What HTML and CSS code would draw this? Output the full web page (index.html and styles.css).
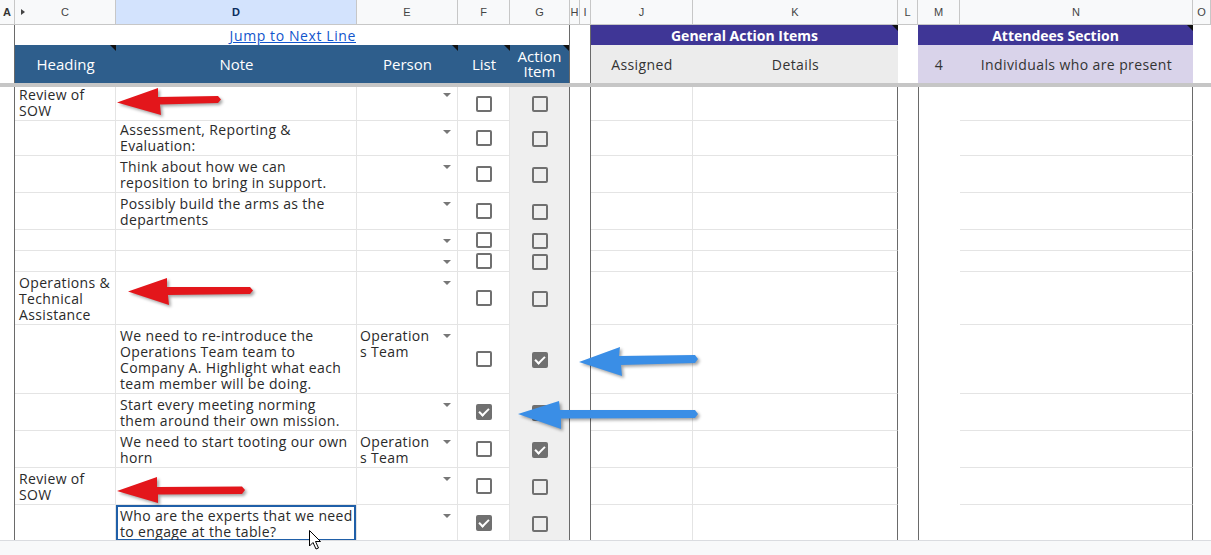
FILE: index.html
```html
<!DOCTYPE html>
<html lang="en">
<head>
    <meta charset="UTF-8">
    <title>Meeting Notes</title>
    <link rel="stylesheet" href="styles.css">
</head>
<body>
    <div class="sheet">
        <!-- column letters -->
        <div class="row colheads">
            <div class="corner">A</div>
            <div class="hidden-b">C</div>
            <div class="active">D</div>
            <div>E</div>
            <div>F</div>
            <div>G</div>
            <div>H</div>
            <div>I</div>
            <div>J</div>
            <div>K</div>
            <div>L</div>
            <div>M</div>
            <div>N</div>
            <div>O</div>
        </div>

        <!-- section bands -->
        <div class="row jump">
            <div class="gutter"></div>
            <div class="link-cell"><a href="#" class="jump-link">Jump to Next Line</a></div>
            <div></div>
            <div></div>
            <div class="split"></div>
            <div></div>
            <div class="split"></div>
            <div class="band marked">General Action Items</div>
            <div></div>
            <div class="band marked">Attendees Section</div>
            <div></div>
        </div>

        <!-- column titles -->
        <div class="row titles">
            <div class="gutter"></div>
            <div class="title marked">Heading</div>
            <div class="title">Note</div>
            <div class="title marked">Person</div>
            <div class="title marked">List</div>
            <div class="title marked split wrap">Action
Item</div>
            <div></div>
            <div class="split"></div>
            <div class="sub">Assigned</div>
            <div class="sub">Details</div>
            <div></div>
            <div class="sub lav">4</div>
            <div class="sub lav">Individuals who are present</div>
            <div></div>
        </div>

        <div class="freeze"></div>

        <div class="pane" id="pane"></div>

        <div class="hscroll"></div>

        <!-- annotation arrows + mouse pointer -->
        <svg class="overlay" width="1211" height="555" viewBox="0 0 1211 555">
            <g class="arrow red">
                <polygon points="117,102.5 158,88 158,97 218,96 221,99.5 218,103 160,104.5 161,115"/>
                <polygon points="128,291.5 167,278 167,287 250,287 253,290.5 250,294 168,295 169,305"/>
                <polygon points="117,491 157,477 157,487 242,486.5 245,490 242,494 158,494.5 158,503"/>
            </g>
            <g class="arrow blue">
                <polygon points="579,362 620,347 619,356 695,355 698,359 695,363 621,365 622,376"/>
                <polygon points="518,414 559,401 560,410 695,410 698,414 695,418 561,418.5 561,429"/>
            </g>
            <path class="pointer" d="M309.5 530.5 L309.5 546 L313 542.5 L316 549 L318.5 548 L315.5 541.5 L320.5 541.5 Z"/>
        </svg>
    </div>

    <script>
        // first row is scrolled a little under the frozen rows
        let rows = [
            { h: 34, heading: "Review of\nSOW", pad: "flush" },
            { h: 35, note: "Assessment, Reporting &\nEvaluation:", pad: "tight" },
            { h: 37, note: "Think about how we can\nreposition to bring in support." },
            { h: 37, note: "Possibly build the arms as the\ndepartments" },
            { h: 21 },
            { h: 21 },
            { h: 53, heading: "Operations &\nTechnical\nAssistance" },
            { h: 69, note: "We need to re-introduce the\nOperations Team team to\nCompany A.  Highlight what each\nteam member will be doing.", person: "Operation\ns Team", action: true },
            { h: 37, note: "Start every meeting norming\nthem around their own mission.", list: true, action: true },
            { h: 37, note: "We need to start tooting our own\nhorn", person: "Operation\ns Team", action: true },
            { h: 37, heading: "Review of\nSOW" },
            { h: 37, note: "Who are the experts that we need\nto engage at the table?", list: true, selected: true }
        ];

        function box(checked) {
            return `<span class="box${checked ? " on" : ""}"></span>`;
        }

        let html = "";
        rows.forEach(function (r) {
            html += `<div class="row line ${r.pad || ""}" style="height:${r.h}px">`;
            html += `<div class="gutter"></div>`;
            html += `<div class="cell">${r.heading || ""}</div>`;
            html += `<div class="cell${r.selected ? " selected" : ""}">${r.note || ""}</div>`;
            html += `<div class="cell person"><span>${r.person || ""}</span><i class="drop"></i></div>`;
            html += `<div class="cell tick">${box(r.list)}</div>`;
            html += `<div class="tick action split">${box(r.action)}</div>`;
            html += `<div></div><div class="split"></div>`;
            html += `<div class="cell"></div><div class="cell end"></div>`;
            html += `<div></div><div class="edge"></div>`;
            html += `<div class="cell end"></div><div></div>`;
            html += `</div>`;
        });
        document.getElementById('pane').innerHTML = html;
    </script>
</body>
</html>
```

FILE: styles.css
```css
* {
    box-sizing: border-box;
}
body {
    margin: 0;
    font-family: "Open Sans", sans-serif;
    font-size: 14px;
    color: #2a2a2a;
    background: #fff;
}
.sheet {
    position: relative;
    width: 1211px;
    height: 555px;
    overflow: hidden;
}
.row {
    display: grid;
    grid-template-columns: 15px 101px 241px 101px 52px 60px 10px 11px 102px 205px 20px 42px 233px 18px;
}

/* column letters */
.colheads {
    height: 25px;
    background: #f8f9fa;
    font-family: "Liberation Sans", Arial, sans-serif;
    font-size: 11px;
    color: #444;
}
.colheads div {
    display: flex;
    align-items: center;
    justify-content: center;
    border-right: 1px solid #c7c7c7;
    border-bottom: 1px solid #c7c7c7;
}
.colheads .corner {
    font-weight: bold;
    color: #333;
    justify-content: flex-start;
    padding-left: 3px;
}
.colheads .active {
    background: #d3e3fd;
    font-weight: bold;
    color: #0b2d5e;
}
.hidden-b {
    position: relative;
}
.hidden-b::before {
    content: "";
    position: absolute;
    left: 6px;
    top: 9px;
    border-left: 4px solid #444;
    border-top: 3px solid transparent;
    border-bottom: 3px solid transparent;
}

.gutter {
    border-right: 1px solid #6a6a6a;
}
.split {
    border-right: 1px solid #6a6a6a;
}

/* band row */
.jump {
    height: 20px;
}
.link-cell {
    grid-column: span 2;
    display: flex;
    align-items: center;
    justify-content: flex-end;
    padding-right: 1px;
}
.jump-link {
    color: #1155cc;
    font-size: 14px;
    letter-spacing: 0.6px;
}
.band {
    grid-column: span 2;
    background: #3f3696;
    color: #fff;
    font-weight: bold;
    display: flex;
    align-items: center;
    justify-content: center;
}
.marked {
    position: relative;
}
.marked::after {
    content: "";
    position: absolute;
    top: 0;
    right: 0;
    border-top: 6px solid #111;
    border-left: 6px solid transparent;
}

/* title row */
.titles {
    height: 38px;
}
.title {
    background: #2e5e8c;
    color: #fff;
    font-size: 15px;
    line-height: 16px;
    display: flex;
    align-items: center;
    justify-content: center;
    text-align: center;
}
.title.wrap {
    white-space: pre-line;
    line-height: 15px;
}
.sub {
    background: #ececec;
    color: #333;
    letter-spacing: 0.4px;
    display: flex;
    align-items: center;
    justify-content: center;
}
.sub.lav {
    background: #d9d3ea;
}

.freeze {
    height: 4px;
    background: #c6c6c6;
}

/* body rows run on under the scrollbar strip */
.cell {
    border-right: 1px solid #e4e4e4;
    border-bottom: 1px solid #e4e4e4;
    padding: 3px 3px 0 4px;
    line-height: 16px;
    letter-spacing: 0.35px;
    white-space: pre-line;
}
.flush .cell {
    padding-top: 0;
}
.tight .cell {
    padding-top: 1px;
}
.cell.end {
    border-right-color: #6a6a6a;
}
.edge {
    border-left: 1px solid #6a6a6a;
}
.person {
    display: flex;
    justify-content: space-between;
    align-items: flex-start;
    padding-left: 3px;
    padding-right: 6px;
}
.drop {
    margin-top: 6px;
    border-left: 4px solid transparent;
    border-right: 4px solid transparent;
    border-top: 4px solid #777;
}
.tight .drop {
    margin-top: 8px;
}
.line .tick {
    display: flex;
    align-items: center;
    justify-content: center;
    padding: 0;
}
.action {
    background: #efefef;
}
.box {
    width: 16px;
    height: 16px;
    border: 2px solid #707070;
    border-radius: 2px;
    display: flex;
    align-items: center;
    justify-content: center;
}
.box.on {
    background: #707070;
}
.box.on::after {
    content: "";
    width: 8px;
    height: 4px;
    margin-top: -2px;
    border-left: 2px solid #fff;
    border-bottom: 2px solid #fff;
    transform: rotate(-45deg);
}
.selected {
    box-shadow: inset 0 0 0 2px #1f5fa8;
}

.hscroll {
    position: absolute;
    left: 0;
    right: 0;
    bottom: 0;
    height: 15px;
    background: #f8f9fa;
    border-top: 1px solid #dadce0;
}

/* arrows drawn over the grid */
.overlay {
    position: absolute;
    top: 0;
    left: 0;
    pointer-events: none;
}
.arrow polygon {
    filter: drop-shadow(2px 2px 1.5px rgba(0, 0, 0, 0.35));
}
.arrow.red {
    fill: #e3161b;
}
.arrow.blue {
    fill: #3a8ee6;
}
.pointer {
    fill: #fff;
    stroke: #000;
    stroke-width: 1;
    stroke-linejoin: round;
}
```
